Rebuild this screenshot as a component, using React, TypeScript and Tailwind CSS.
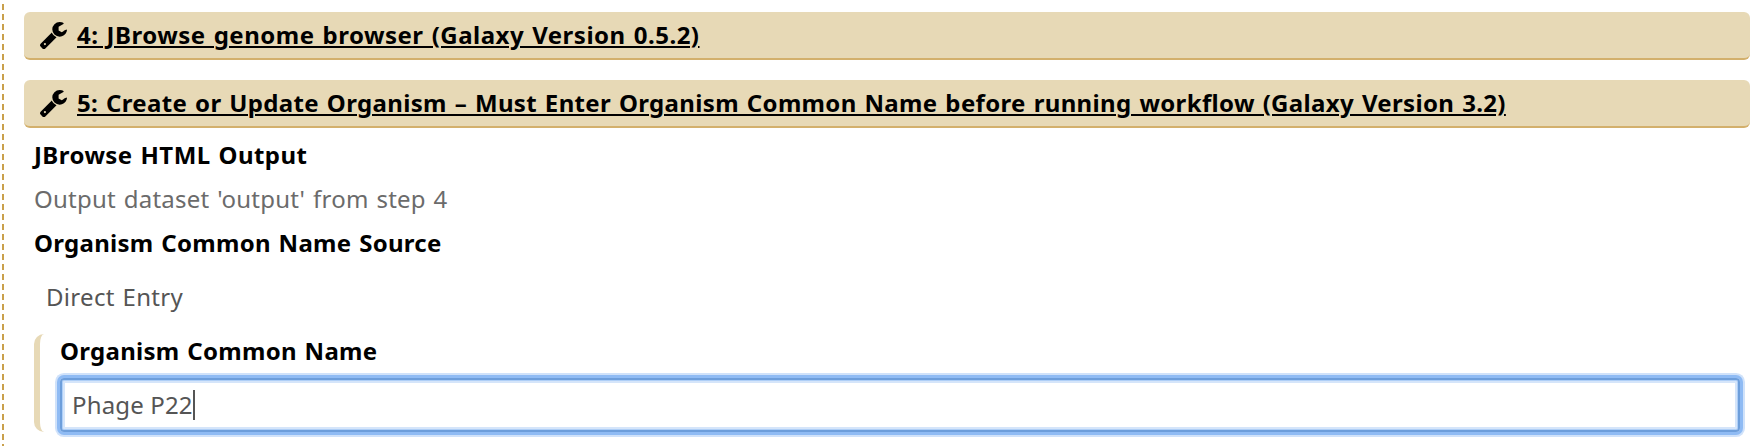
import React from "react";

function Wrench() {
  return (
    <svg viewBox="21 128 1642 1643" className="h-[27px] w-[27px] shrink-0" fill="#000">
      <path d="M384 1472q0-26-19-45t-45-19-45 19-19 45 19 45 45 19 45-19 19-45zm644-420l-682 682q-37 37-90 37-52 0-91-37l-106-108q-38-36-38-90 0-53 38-91l681-681q39 98 114.500 173.500t173.500 114.500zm634-435q0 39-23 106-47 134-164.500 217.500t-258.500 83.500q-185 0-316.500-131.500t-131.500-316.500 131.500-316.500 316.500-131.500q58 0 121.500 16.500t107.500 46.500q16 11 16 28t-16 28l-293 169v224l193 107q5-3 79-48.500t135.500-81 70.500-35.500q15 0 23.500 10t8.500 25z" />
    </svg>
  );
}

function StepBar({ title, spacing }: { title: string; spacing: string }) {
  return (
    <div className="flex h-12 items-center rounded-[6px] border-b-2 border-[#d3b06c] bg-[#e7d9b6] pl-4">
      <Wrench />
      <a
        className={`ml-[10px] whitespace-nowrap font-bold leading-[34px] underline decoration-2 underline-offset-2 ${spacing}`}
      >
        {title}
      </a>
    </div>
  );
}

export default function App() {
  return (
    <div className="flex h-[446px] w-full overflow-hidden bg-white pl-[2px] font-['Noto_Sans','Open_Sans',sans-serif] text-[24px] text-black [font-variant-ligatures:common-ligatures]">
      <div className="w-[2px] shrink-0 bg-[repeating-linear-gradient(to_bottom,#fff_0px,#fff_4px,#c9a04c_4px,#c9a04c_10px)]" />
      <div className="ml-5 flex min-w-0 flex-1 flex-col pt-3">
        <StepBar
          title="4: JBrowse genome browser (Galaxy Version 0.5.2)"
          spacing="tracking-[0.5px] [word-spacing:1.3px]"
        />
        <div className="h-5" />
        <StepBar
          title="5: Create or Update Organism – Must Enter Organism Common Name before running workflow (Galaxy Version 3.2)"
          spacing="tracking-[0.34px] [word-spacing:1.3px]"
        />
        <div className="flex flex-col items-start whitespace-nowrap pl-[10px] pt-[10px] leading-[34px] [word-spacing:1.3px]">
          <span className="font-bold tracking-[0.43px]">JBrowse HTML Output</span>
          <span className="mt-[10px] tracking-[0.24px] text-[#6b6b6b]">Output dataset 'output' from step 4</span>
          <span className="mt-[10px] font-bold tracking-[0.28px]">Organism Common Name Source</span>
          <span className="ml-3 mt-5 tracking-[0.3px] text-[#555]">Direct Entry</span>
        </div>
        <div className="ml-[10px] mr-[10px] mt-5 flex h-[98px] flex-col rounded-l-[10px] border-l-[6px] border-[#e7d9b6] pl-5">
          <span className="self-start whitespace-nowrap font-bold leading-[34px] tracking-[0.28px] [word-spacing:1.3px]">
            Organism Common Name
          </span>
          <div className="mt-[10px] flex h-[54px] shrink-0 items-center rounded-[4px] border-2 border-[#6d9edb] pl-[10px] text-[#555] shadow-[0_0_0_3px_#8fbbf4,0_0_0_5px_#d0e2fa,inset_0_0_0_1px_#afcff7,inset_0_0_0_3px_#d5e5fa]">
            <span className="whitespace-nowrap leading-[34px] tracking-[0.15px]">Phage P22</span>
            <span className="h-[30px] w-[2px] bg-[#555]" />
          </div>
        </div>
      </div>
    </div>
  );
}
